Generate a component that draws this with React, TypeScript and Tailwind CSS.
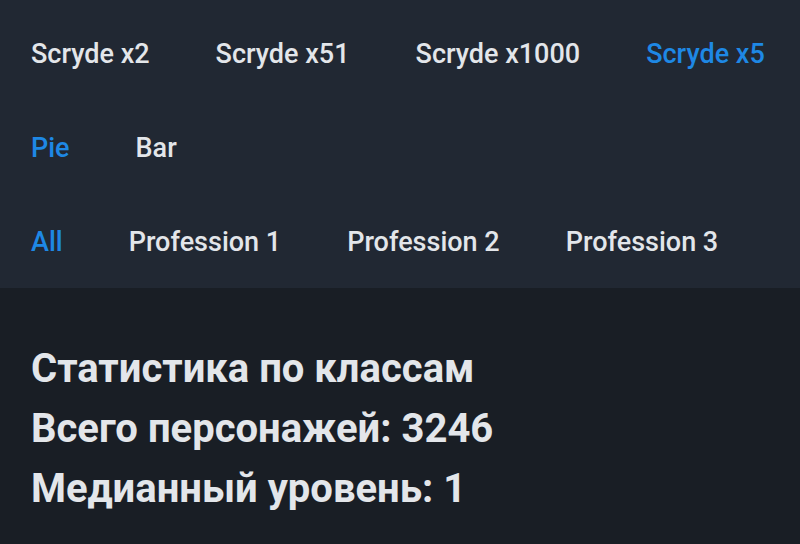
import { useState } from "react";

const servers = ["Scryde x2", "Scryde x51", "Scryde x1000", "Scryde x5"];
const charts = ["Pie", "Bar"];
const professions = ["All", "Profession 1", "Profession 2", "Profession 3"];

function TabRow({
  items,
  active,
  onSelect,
}: {
  items: string[];
  active: string;
  onSelect: (v: string) => void;
}) {
  return (
    <div className="flex h-[94px] items-center gap-[66px] pl-[31px]">
      {items.map((item) => (
        <button
          key={item}
          onClick={() => onSelect(item)}
          className={
            item === active
              ? "text-[27px] font-medium text-[#1e88e5]"
              : "text-[27px] font-medium text-[#e3e6ea]"
          }
        >
          {item}
        </button>
      ))}
    </div>
  );
}

export default function App() {
  const [server, setServer] = useState("Scryde x5");
  const [chart, setChart] = useState("Pie");
  const [profession, setProfession] = useState("All");

  return (
    <div
      className="min-h-[544px] bg-[#191e25]"
      style={{ fontFamily: "Roboto, 'Noto Sans', sans-serif" }}
    >
      {/* Filters */}
      <div className="h-[288px] bg-[#212833] pt-[7px]">
        <TabRow items={servers} active={server} onSelect={setServer} />
        <TabRow items={charts} active={chart} onSelect={setChart} />
        <TabRow items={professions} active={profession} onSelect={setProfession} />
      </div>

      {/* Stats */}
      <div className="px-[31px] pt-[51px] text-[40px] font-bold leading-[60px] text-[#e3e6ea]">
        <div>Статистика по классам</div>
        <div>Всего персонажей: 3246</div>
        <div>Медианный уровень: 1</div>
      </div>
    </div>
  );
}
